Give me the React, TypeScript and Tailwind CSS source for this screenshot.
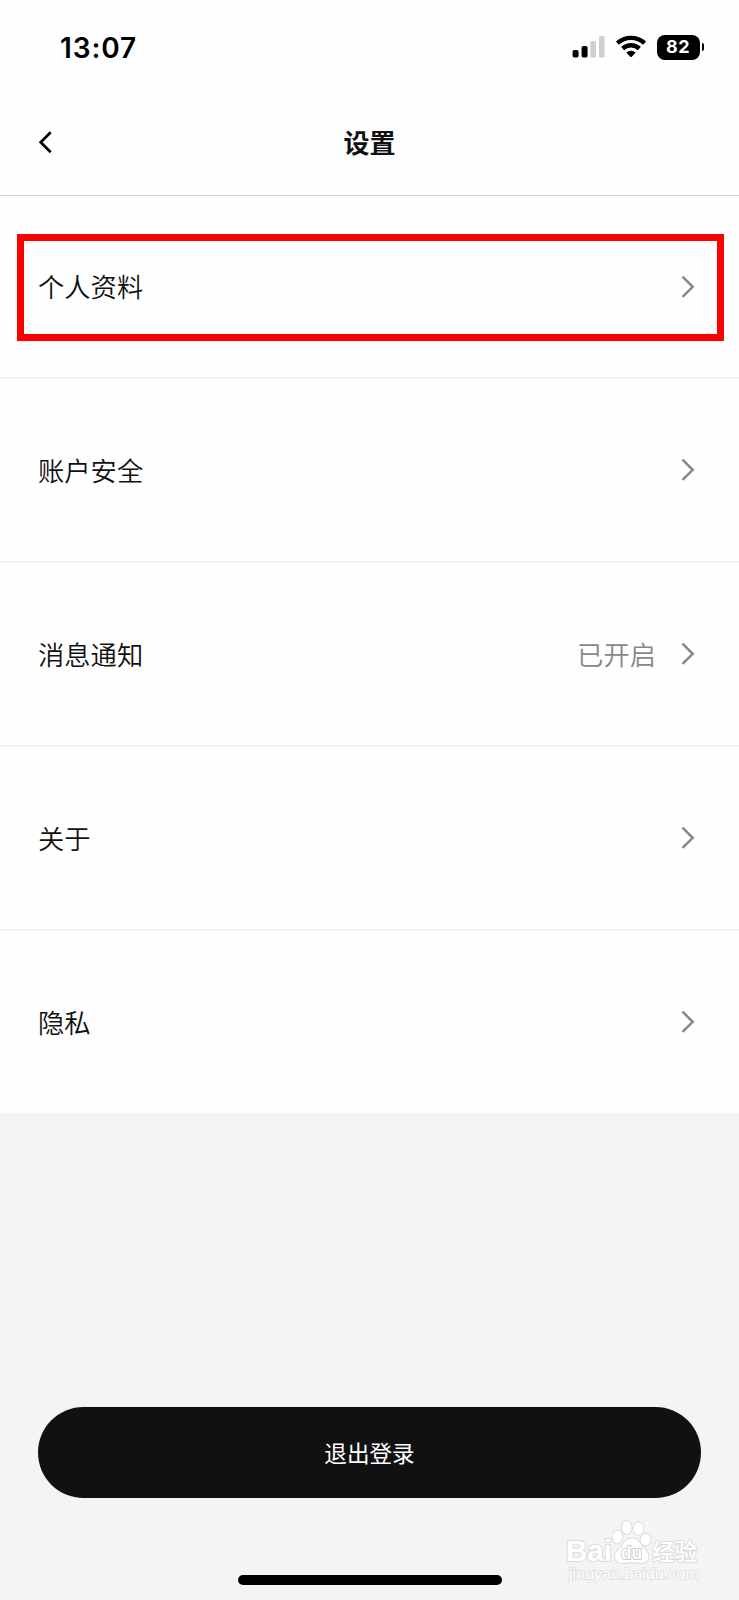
import clsx from "clsx";

interface Item {
  label: string;
  value?: string;
  marked?: boolean;
  height: string;
}

const items: Item[] = [
  { label: "个人资料", marked: true, height: "h-[183px]" },
  { label: "账户安全", height: "h-[184px]" },
  { label: "消息通知", value: "已开启", height: "h-[184px]" },
  { label: "关于", height: "h-[184px]" },
  { label: "隐私", height: "h-[182px]" },
];

function StatusBar() {
  return (
    <div className="flex h-[94px] items-center justify-between pr-[35px] pl-[60px]">
      <span className="pt-[2px] font-['Inter'] text-[28px] leading-none font-semibold tracking-[0.9px] text-black">
        13:07
      </span>
      <div className="flex items-center">
        <svg className="mr-[10px] h-[24px] w-[34px]" viewBox="0 0 34 24">
          <rect x="1.6" y="15" width="6" height="7.5" rx="1.8" fill="#000" />
          <rect x="10.6" y="11" width="6" height="11.5" rx="1.8" fill="#000" />
          <rect x="19.4" y="6" width="5.6" height="16.5" rx="1.6" fill="#cfcfcf" />
          <rect x="28" y="1" width="5.6" height="21.5" rx="1.6" fill="#cfcfcf" />
        </svg>
        <svg className="mr-[10px] h-[24px] w-[32px]" viewBox="0 0 32 24">
          <g fill="none" stroke="#000" strokeWidth="4.4">
            <path d="M2.4 8.200a20 20 0 0 1 27.200 0" />
            <path d="M7.6 13.500a12.500 12.500 0 0 1 16.800 0" />
          </g>
          <path d="M11.300 17.600a7.200 7.200 0 0 1 9.400 0l-3.900 4.100a1.100 1.100 0 0 1-1.600 0z" fill="#000" />
        </svg>
        <div className="flex h-[25px] w-[43px] items-center justify-center rounded-[8px] bg-black font-['Inter'] text-[18px] leading-none font-bold tracking-[0.5px] text-white">
          82
        </div>
        <div className="ml-[2px] h-[8px] w-[2.5px] rounded-r-full bg-black" />
      </div>
    </div>
  );
}

function Header() {
  return (
    <header className="grid h-[102px] grid-cols-[80px_1fr_80px] items-center border-b border-[#cccccc] pb-[5px]">
      <button type="button" aria-label="返回" className="pl-[38px]">
        <svg className="h-[24px] w-[16px]" viewBox="0 0 16 24">
          <path
            d="M12.7 2.2 2.700 12.200l10 10"
            fill="none"
            stroke="#000"
            strokeWidth="2.7"
          />
        </svg>
      </button>
      <h1 className="text-center text-[26px] leading-none font-bold text-[#111111]">设置</h1>
    </header>
  );
}

function Row({ label, value, marked, height }: Item) {
  return (
    <li
      className={clsx(
        "relative flex items-center border-b-2 border-[#f0f0f0] pr-[43px] pl-[38px] last:border-b-0",
        height,
      )}
    >
      <span className="text-[26.3px] leading-none font-[350] text-[#111111]">{label}</span>
      {value && (
        <span className="mr-[24px] ml-auto text-[26.3px] leading-none font-[350] text-[#888888]">
          {value}
        </span>
      )}
      <svg
        className={clsx("h-[24px] w-[16px]", !value && "ml-auto")}
        viewBox="0 0 16 24"
      >
        <path
          d="M2.500 1.700 12.700 11.800 2.500 21.900"
          fill="none"
          stroke="#888888"
          strokeWidth="2.5"
        />
      </svg>
      {marked && (
        <div className="absolute top-[38px] right-[15px] left-[17px] h-[106.5px] border-[7px] border-[#ff0000]" />
      )}
    </li>
  );
}

function Watermark() {
  return (
    <svg className="absolute top-[1515px] left-[562px] h-[72px] w-[142px]" viewBox="0 0 142 72">
      <g
        fill="#ffffff"
        stroke="#dcdcdc"
        strokeWidth="2"
        paintOrder="stroke"
        strokeLinejoin="round"
      >
        <text x="4" y="46" fontFamily="Liberation Sans" fontSize="29" fontWeight="700" textLength="46" lengthAdjust="spacingAndGlyphs">
          Bai
        </text>
        <ellipse cx="55.5" cy="22" rx="4.8" ry="6.4" />
        <ellipse cx="64.7" cy="12.5" rx="4.8" ry="6.5" />
        <ellipse cx="76.5" cy="13.5" rx="5" ry="6.3" />
        <ellipse cx="83.6" cy="24.5" rx="5" ry="6" />
        <path d="M70 23.500c-5 0-7.500 4-10.500 8-3 3.300-6.500 5.500-6.500 10 0 4 3 6.500 7.500 6.500 3.500 0 6-.7 9.500-.7s6 .7 9 .7c5 0 7.500-2.500 7.500-6.500 0-4.500-3.500-6.500-6-10-3-4-5.500-8-10-8z" />
        <text x="90" y="45" fontFamily="Noto Sans CJK SC" fontSize="22.5" fontWeight="500" textLength="45">
          经验
        </text>
      </g>
      <text
        x="59"
        y="44"
        fontFamily="Liberation Sans"
        fontSize="18"
        fontWeight="700"
        fill="#ffffff"
        stroke="#cccccc"
        strokeWidth="1.8"
        paintOrder="stroke"
        textLength="21"
        lengthAdjust="spacingAndGlyphs"
      >
        du
      </text>
      <text
        x="7"
        y="64"
        fontFamily="Liberation Sans"
        fontSize="15"
        fill="#ffffff"
        stroke="#dfdfdf"
        strokeWidth="1.6"
        paintOrder="stroke"
        textLength="130"
        lengthAdjust="spacingAndGlyphs"
      >
        jingyan.baidu.com
      </text>
    </svg>
  );
}

export default function App() {
  return (
    <div className="relative flex h-[1600px] w-[739px] flex-col overflow-hidden bg-[#f4f4f4] font-['Noto_Sans_CJK_SC',sans-serif]">
      <div className="bg-[#fefefe]">
        <StatusBar />
        <Header />
        <ul>
          {items.map((item) => (
            <Row key={item.label} {...item} />
          ))}
        </ul>
      </div>
      <div className="mt-auto flex flex-col items-center px-[38px] pb-[15px]">
        <button
          type="button"
          className="h-[91px] w-full rounded-full bg-[#111111] pt-[2px] text-[22.6px] leading-none text-white"
        >
          退出登录
        </button>
        <div className="mt-[77px] h-[10px] w-[264px] rounded-full bg-black" />
      </div>
      <Watermark />
    </div>
  );
}
